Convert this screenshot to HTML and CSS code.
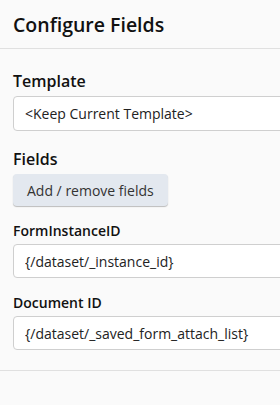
FILE: index.html
```html
<!DOCTYPE html>
<html>
<head>
  <title>Configure Fields</title>
  <link rel="stylesheet" href="styles.css">
</head>
<body>
<div class="panel">
  <div class="panel-header">
    <h1 class="panel-title">Configure Fields</h1>
  </div>
  <div class="panel-body">
    <div class="field-group">
      <label class="section-label" for="template">Template</label>
      <input class="text-input tall" type="text" id="template" value="&lt;Keep Current Template&gt;">
    </div>
    <div class="field-group">
      <div class="section-label">Fields</div>
      <button class="btn" type="button">Add / remove fields</button>
    </div>
    <div class="field-group">
      <label class="field-label" for="formInstanceId">FormInstanceID</label>
      <input class="text-input" type="text" id="formInstanceId" value="{/dataset/_instance_id}">
    </div>
    <div class="field-group">
      <label class="field-label" for="documentId">Document ID</label>
      <input class="text-input" type="text" id="documentId" value="{/dataset/_saved_form_attach_list}">
    </div>
  </div>
  <div class="panel-footer"></div>
</div>
</body>
</html>
```

FILE: styles.css
```css
body {
  margin: 0;
  background-color: #fafafa;
  font-family: "Open Sans", "Noto Sans", sans-serif;
  color: #111;
  overflow: hidden;
}

.panel {
  width: 320px;
}

.panel-header {
  height: 48px;
  display: flex;
  align-items: center;
  padding: 0 13px;
  border-bottom: 1px solid #e0e0e0;
}

.panel-title {
  margin: 0;
  font-size: 19.5px;
  font-weight: 600;
  line-height: 1;
  padding-top: 2px;
}

.panel-body {
  padding: 21px 13px 20px;
  display: flex;
  flex-direction: column;
  gap: 15px;
}

.field-group {
  display: flex;
  flex-direction: column;
  align-items: flex-start;
}

.field-group:first-child {
  margin-bottom: 2px;
}

.section-label {
  font-size: 16px;
  font-weight: 600;
  line-height: 22px;
  margin-bottom: 4px;
}

.field-label {
  font-size: 14px;
  font-weight: 600;
  line-height: 20px;
  margin-bottom: 3px;
}

.text-input {
  box-sizing: border-box;
  width: 100%;
  height: 34px;
  padding: 0 11px;
  border: 1px solid #cfcfcf;
  border-radius: 4px;
  background: #fff;
  font-family: "Open Sans", "Noto Sans", sans-serif;
  font-size: 14px;
  color: #222;
  outline: none;
}

.text-input.tall {
  height: 35px;
}

.btn {
  height: 32px;
  padding: 0 14px;
  border: none;
  border-radius: 4px;
  background-color: #e3e8ef;
  box-shadow: 0 1px 1px rgba(0, 0, 0, 0.25);
  font-family: "Open Sans", "Noto Sans", sans-serif;
  font-size: 14px;
  color: #333;
  cursor: pointer;
}

.panel-footer {
  border-top: 1px solid #e0e0e0;
}
```
